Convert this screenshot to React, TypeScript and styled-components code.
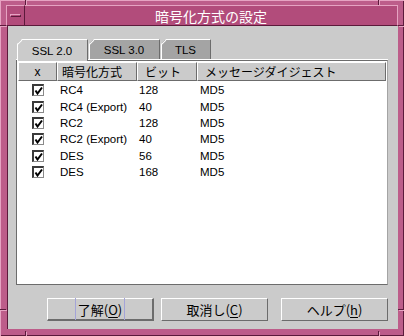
import React from "react";
import styled, { createGlobalStyle } from "styled-components";

const COLORS = {
  frame: "#bd5d8a",
  frameLight: "#e6a3c2",
  frameDark: "#5c1a3b",
  title: "#b24c7b",
  grey: "#cbcbcb",
  greyDark: "#a4a4a4",
  shadow: "#6c6c6c",
  white: "#ffffff",
  text: "#000000",
};

const FONT = `"Liberation Sans", "Noto Sans CJK JP", sans-serif`;

const GlobalStyle = createGlobalStyle`
  html, body {
    margin: 0;
    padding: 0;
    background: ${COLORS.frame};
  }
  body {
    font-family: ${FONT};
  }
`;

const Window = styled.div`
  position: relative;
  width: 404px;
  height: 336px;
  box-sizing: border-box;
  padding: 5px 6px 7px 6px;
  display: flex;
  flex-direction: column;
  background: ${COLORS.frame};
  box-shadow: inset 1px 1px 0 ${COLORS.frameLight},
    inset -1px -1px 0 ${COLORS.frameDark};
`;

const Notch = styled.div<{ $vertical?: boolean }>`
  position: absolute;
  background: ${COLORS.frameDark};
  box-shadow: 1px 1px 0 ${COLORS.frameLight};
  width: ${(p) => (p.$vertical ? "1px" : "6px")};
  height: ${(p) => (p.$vertical ? "5px" : "1px")};
`;

const TitleBar = styled.div`
  height: 21px;
  display: flex;
  flex-shrink: 0;
  background: ${COLORS.title};
  box-shadow: inset 0 -1px 0 ${COLORS.frameDark};
`;

const MenuButton = styled.div`
  width: 19px;
  display: flex;
  align-items: center;
  justify-content: center;
  box-sizing: border-box;
  border-top: 1px solid ${COLORS.frameLight};
  border-left: 1px solid ${COLORS.frameLight};
  border-right: 1px solid ${COLORS.frameDark};
  border-bottom: 1px solid ${COLORS.frameDark};

  span {
    width: 11px;
    height: 3px;
    box-sizing: border-box;
    border-top: 1px solid ${COLORS.frameLight};
    border-left: 1px solid ${COLORS.frameLight};
    border-right: 1px solid ${COLORS.frameDark};
    border-bottom: 1px solid ${COLORS.frameDark};
    background: ${COLORS.title};
  }
`;

const TitleText = styled.div`
  flex: 1;
  display: flex;
  align-items: center;
  justify-content: center;
  box-sizing: border-box;
  border-top: 1px solid ${COLORS.frameLight};
  border-right: 1px solid ${COLORS.frameLight};
  border-bottom: 1px solid ${COLORS.frameDark};
  color: ${COLORS.white};
  font-family: "Noto Sans CJK JP", sans-serif;
  font-size: 14px;
  padding-top: 1px;
`;

const Body = styled.div`
  flex: 1;
  background: ${COLORS.grey};
  display: flex;
  flex-direction: column;
  margin-left: 1px;
  box-shadow: inset 1px 0 0 ${COLORS.frameDark};
`;

const TabRow = styled.div`
  display: flex;
  margin: 12px 0 0 10px;
  height: 22px;
  align-items: flex-end;
`;

const Tab = styled.div<{ $active?: boolean; $width: number }>`
  position: relative;
  width: ${(p) => p.$width}px;
  height: ${(p) => (p.$active ? 22 : 20)}px;
  box-sizing: border-box;
  margin-bottom: ${(p) => (p.$active ? -1 : 1)}px;
  margin-right: 1px;
  background: ${(p) => (p.$active ? COLORS.grey : COLORS.greyDark)};
  border-top: 1px solid ${COLORS.white};
  border-right: 1px solid ${COLORS.shadow};
  display: flex;
  align-items: center;
  justify-content: center;
  font-size: 11.5px;
  color: ${COLORS.text};
  padding-top: ${(p) => (p.$active ? 0 : 1)}px;
  clip-path: polygon(5px 0, 100% 0, 100% 100%, 0 100%, 0 5px);
  box-shadow: inset 1px 0 0 ${COLORS.white};

  &::before {
    content: "";
    position: absolute;
    left: -1px;
    top: 2px;
    width: 7px;
    height: 1px;
    background: ${COLORS.white};
    transform: rotate(-45deg);
  }
`;

const ListPanel = styled.div`
  margin: 0 0 0 9px;
  width: 372px;
  height: 225px;
  box-sizing: border-box;
  background: ${COLORS.white};
  border-top: 1px solid ${COLORS.shadow};
  border-left: 1px solid ${COLORS.shadow};
  border-right: 1px solid ${COLORS.greyDark};
  border-bottom: 1px solid ${COLORS.shadow};
  box-shadow: 0 -1px 0 ${COLORS.white};
  padding: 1px 1px 0 1px;
`;

const GRID = "39px 80px 60px 189px";

const HeaderRow = styled.div`
  display: grid;
  grid-template-columns: ${GRID};
  height: 18px;
  background: ${COLORS.grey};
`;

const HeaderCell = styled.div<{ $center?: boolean; $pad?: number }>`
  box-sizing: border-box;
  border-top: 1px solid ${COLORS.white};
  border-left: 1px solid ${COLORS.white};
  border-right: 1px solid ${COLORS.shadow};
  border-bottom: 1px solid ${COLORS.shadow};
  display: flex;
  align-items: center;
  justify-content: ${(p) => (p.$center ? "center" : "flex-start")};
  padding-left: ${(p) => p.$pad ?? 0}px;
  font-size: 12px;
  color: ${COLORS.text};
  white-space: nowrap;
`;

const Rows = styled.div`
  padding-top: 2px;
`;

const Row = styled.div`
  display: grid;
  grid-template-columns: ${GRID};
  height: 16.4px;
  align-items: center;
  font-size: 11.5px;
  color: ${COLORS.text};
`;

const Cell = styled.div<{ $pad?: number }>`
  padding-left: ${(p) => p.$pad ?? 3}px;
  white-space: nowrap;
  line-height: 14px;
`;

const CheckCell = styled.div`
  display: flex;
  justify-content: center;
  padding-left: 1px;
`;

const CheckBox = styled.div`
  width: 12px;
  height: 12px;
  box-sizing: border-box;
  background: ${COLORS.white};
  border-top: 2px solid #3a3a3a;
  border-left: 2px solid #3a3a3a;
  border-right: 1px solid #8a8a8a;
  border-bottom: 1px solid #8a8a8a;
  display: flex;
  align-items: center;
  justify-content: center;

  svg {
    display: block;
  }
`;

const ButtonRow = styled.div`
  display: flex;
  margin-top: 13px;
  padding-left: 40px;
`;

const Button = styled.div<{ $default?: boolean; $gap?: number }>`
  width: 107px;
  height: 23px;
  box-sizing: border-box;
  margin-left: ${(p) => p.$gap ?? 0}px;
  background: ${COLORS.grey};
  border-top: 1px solid ${COLORS.white};
  border-left: 1px solid ${COLORS.white};
  border-right: ${(p) => (p.$default ? 2 : 1)}px solid ${COLORS.shadow};
  border-bottom: ${(p) => (p.$default ? 2 : 1)}px solid ${COLORS.shadow};
  display: flex;
  align-items: center;
  justify-content: center;
  font-family: "Noto Sans CJK JP", sans-serif;
  font-size: 13px;
  color: ${COLORS.text};

  u {
    text-underline-offset: 2px;
  }
`;

const FocusLabel = styled.span`
  border-left: 1px solid #a4a4d8;
  border-right: 1px solid #a4a4d8;
  padding: 2px 2px 1px 2px;
`;

const Check = () => (
  <svg width="9" height="9" viewBox="0 0 9 9">
    <path d="M1.5 4.5 L3.5 7.5 L8 1.5" stroke="#000" strokeWidth="2" fill="none" />
  </svg>
);

const ciphers = [
  { name: "RC4", bits: "128", digest: "MD5" },
  { name: "RC4 (Export)", bits: "40", digest: "MD5" },
  { name: "RC2", bits: "128", digest: "MD5" },
  { name: "RC2 (Export)", bits: "40", digest: "MD5" },
  { name: "DES", bits: "56", digest: "MD5" },
  { name: "DES", bits: "168", digest: "MD5" },
];

export default function App() {
  return (
    <>
      <GlobalStyle />
      <Window>
        <Notch $vertical style={{ left: 25, top: 0 }} />
        <Notch $vertical style={{ left: 378, top: 0 }} />
        <Notch $vertical style={{ left: 25, bottom: 0 }} />
        <Notch $vertical style={{ left: 378, bottom: 0 }} />
        <Notch style={{ left: 0, top: 25 }} />
        <Notch style={{ left: 0, top: 309 }} />
        <Notch style={{ right: 0, top: 25 }} />
        <Notch style={{ right: 0, top: 309 }} />

        <TitleBar>
          <MenuButton>
            <span />
          </MenuButton>
          <TitleText>暗号化方式の設定</TitleText>
        </TitleBar>

        <Body>
          <TabRow>
            <Tab $active $width={71}>SSL 2.0</Tab>
            <Tab $width={71}>SSL 3.0</Tab>
            <Tab $width={50}>TLS</Tab>
          </TabRow>

          <ListPanel>
            <HeaderRow>
              <HeaderCell $center>x</HeaderCell>
              <HeaderCell $pad={4}>暗号化方式</HeaderCell>
              <HeaderCell $pad={7}>ビット</HeaderCell>
              <HeaderCell $pad={7}>メッセージダイジェスト</HeaderCell>
            </HeaderRow>
            <Rows>
              {ciphers.map((c, i) => (
                <Row key={i}>
                  <CheckCell>
                    <CheckBox>
                      <Check />
                    </CheckBox>
                  </CheckCell>
                  <Cell $pad={3}>{c.name}</Cell>
                  <Cell $pad={2}>{c.bits}</Cell>
                  <Cell $pad={3}>{c.digest}</Cell>
                </Row>
              ))}
            </Rows>
          </ListPanel>

          <ButtonRow>
            <Button $default>
              <FocusLabel>
                了解(<u>O</u>)
              </FocusLabel>
            </Button>
            <Button $gap={7}>
              取消し(<u>C</u>)
            </Button>
            <Button $gap={13}>
              ヘルプ(<u>h</u>)
            </Button>
          </ButtonRow>
        </Body>
      </Window>
    </>
  );
}
